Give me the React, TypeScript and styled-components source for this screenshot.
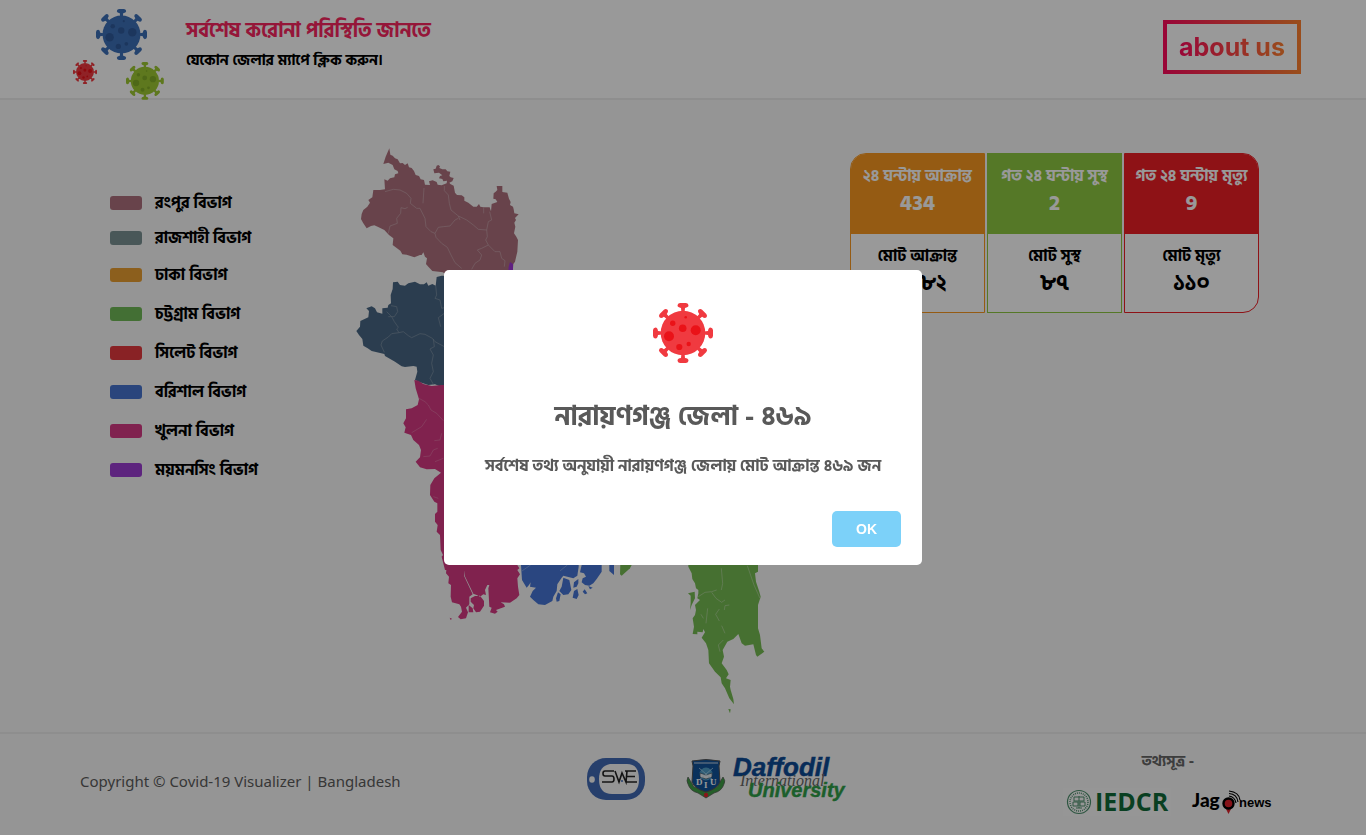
import React from "react";
import styled, { createGlobalStyle } from "styled-components";

const bangla = `"Hind Siliguri", "Noto Sans", "Noto Sans Bengali", "Open Sans", sans-serif`;

const GlobalStyle = createGlobalStyle`
  * { box-sizing: border-box; }
  body { margin: 0; background: #f8f8f8; font-family: ${bangla}; color: #000; }
  h1, h2, p, ul { margin: 0; padding: 0; }
`;

const Page = styled.div`
  min-height: 100vh;
  display: flex;
  flex-direction: column;
`;

const Header = styled.header`
  display: flex;
  justify-content: space-between;
  align-items: flex-start;
  min-height: 100px;
  padding: 0 65px 0 70px;
  background: #fff;
  border-bottom: 2px solid #ededed;
`;

const Brand = styled.div`
  display: flex;
  gap: 16px;
`;

const BrandArt = styled.svg`
  display: block;
  width: 100px;
  height: 100px;
  margin-bottom: -2px;
`;

const BrandText = styled.div`
  padding-top: 15px;
`;

const Title = styled.h1`
  font-size: 20px;
  line-height: 32px;
  font-weight: 700;
  color: #f92660;
`;

const Subtitle = styled.p`
  font-size: 15px;
  line-height: 28px;
  font-weight: 700;
`;

const AboutLink = styled.a`
  display: block;
  margin-top: 20px;
  width: 138px;
  border: 4px solid;
  border-image: linear-gradient(to right, #ff0a5c, #ff8030) 1;
  text-align: center;
  text-decoration: none;
`;

const AboutText = styled.span`
  font: 700 25px/46px Inter, "Liberation Sans", sans-serif;
  color: transparent;
  background: linear-gradient(to right, #ff0a5c, #ff8030);
  background-clip: text;
  -webkit-background-clip: text;
`;

const Main = styled.main`
  flex: 1;
  display: grid;
  grid-template-columns: 240px 420px 1fr;
  align-items: start;
  padding: 40px 0 12px 110px;
`;

const Legend = styled.ul`
  list-style: none;
  padding-top: 45px;
`;

const LegendItem = styled.li<{ $tight: boolean }>`
  display: flex;
  align-items: center;
  gap: 13px;
  height: ${(p) => (p.$tight ? 35 : 39)}px;
  font-size: 16px;
  line-height: 24px;
  font-weight: 700;
`;

const Swatch = styled.span<{ $color: string }>`
  width: 32px;
  height: 14px;
  border-radius: 3px;
  background: ${(p) => p.$color};
`;

const MapArt = styled.svg`
  display: block;
  width: 420px;
  height: 580px;
`;

const Stats = styled.div`
  display: flex;
  gap: 2px;
  padding: 13px 0 0 80px;
`;

const Card = styled.section<{ $color: string }>`
  width: 135px;
  overflow: hidden;
  text-align: center;
  font-weight: 700;
  background: #fff;
  border: 1px solid ${(p) => p.$color};
  &:first-child { border-radius: 16px 0 0 16px; }
  &:last-child { border-radius: 0 16px 16px 0; }
`;

const CardPart = styled.div<{ $fill?: string }>`
  height: ${(p) => (p.$fill ? 80 : 78)}px;
  padding-top: 9px;
  color: ${(p) => (p.$fill ? "#fff" : "#000")};
  background: ${(p) => p.$fill || "transparent"};
`;

const CardLabel = styled.p`
  font-size: 16px;
  line-height: 26px;
  white-space: nowrap;
`;

const CardValue = styled.p`
  font-size: 22px;
  line-height: 28px;
`;

const Footer = styled.footer`
  display: grid;
  grid-template-columns: 1fr 262px 1fr;
  min-height: 103px;
  border-top: 2px solid #ededed;
`;

const Copyright = styled.p`
  padding: 37px 0 0 80px;
  font: 15px/20px "Noto Sans", sans-serif;
  color: #5c5c5c;
`;

const Logos = styled.div`
  display: flex;
  align-items: center;
  align-self: start;
  gap: 41px;
  padding: 17px 0 0 35px;
`;

const Art = styled.svg`
  display: block;
  flex: none;
`;

const Sources = styled.div`
  justify-self: end;
  width: 210px;
  margin-right: 93px;
  padding-top: 16px;
`;

const SourceTitle = styled.p`
  font-size: 15px;
  line-height: 24px;
  font-weight: 700;
  color: #666;
  text-align: center;
`;

const SourceRow = styled.div`
  display: flex;
  align-items: center;
  gap: 20px;
  padding-top: 10px;
`;

const Overlay = styled.div`
  position: fixed;
  inset: 0;
  display: flex;
  align-items: center;
  justify-content: center;
  background: rgba(0, 0, 0, 0.4);
`;

const Modal = styled.div`
  width: 478px;
  padding-top: 33px;
  background: #fff;
  border-radius: 5px;
  display: flex;
  flex-direction: column;
  align-items: center;
  color: #595959;
  font-weight: 700;
`;

const ModalTitle = styled.h2`
  margin-top: 34px;
  font-size: 27px;
  line-height: 40px;
`;

const ModalText = styled.p`
  margin-top: 16px;
  font-size: 16px;
  line-height: 26px;
  font-weight: 700;
`;

const ModalFooter = styled.div`
  align-self: stretch;
  display: flex;
  justify-content: flex-end;
  padding: 32px 21px 18px;
`;

const OkButton = styled.button`
  width: 69px;
  height: 36px;
  border: 0;
  border-radius: 5px;
  background: #7cd1f9;
  color: #fff;
  font: 600 14px/20px "Liberation Sans", sans-serif;
`;

const VirusArt = ({ body, spot }: { body: string; spot: string }) => (
  <>
    <g fill={body}>
      <circle cx="30" cy="30" r="22.3" />
      {[0, 45, 90, 135, 180, 225, 270, 315].map((a) => (
        <path
          key={a}
          transform={`rotate(${a} 30 30)`}
          d="M27 0H33Q35.500 .3 35.500 2.600Q35.300 4.600 32 5L31.600 9H28.400L28 5Q24.700 4.600 24.500 2.600Q24.500 .3 27 0Z"
        />
      ))}
    </g>
    <g fill={spot}>
      <circle cx="42.700" cy="27.300" r="5" />
      <circle cx="16" cy="33.300" r="5" />
      <circle cx="29.700" cy="25.300" r="3.800" />
      <circle cx="19.700" cy="20.300" r="2.700" />
      <circle cx="26.300" cy="44" r="3.100" />
      <circle cx="35.700" cy="41" r="2.200" />
      <circle cx="32.700" cy="14.300" r="1.300" />
    </g>
  </>
);

const divisions = [
  { name: "রংপুর বিভাগ", color: "#ad717d" },
  { name: "রাজশাহী বিভাগ", color: "#7a9293" },
  { name: "ঢাকা বিভাগ", color: "#e99e31" },
  { name: "চট্টগ্রাম বিভাগ", color: "#71b957" },
  { name: "সিলেট বিভাগ", color: "#e43a3f" },
  { name: "বরিশাল বিভাগ", color: "#4774cf" },
  { name: "খুলনা বিভাগ", color: "#d63a84" },
  { name: "ময়মনসিং বিভাগ", color: "#9c3cd2" },
];

const stats = [
  { color: "#f89821", today: "২৪ ঘন্টায় আক্রান্ত", count: "434", total: "মোট আক্রান্ত", sum: "৩৩৮২" },
  { color: "#8ec841", today: "গত ২৪ ঘন্টায় সুস্থ", count: "2", total: "মোট সুস্থ", sum: "৮৭" },
  { color: "#ed1e25", today: "গত ২৪ ঘন্টায় মৃত্যু", count: "9", total: "মোট মৃত্যু", sum: "১১০" },
];

const BangladeshMap = () => (
  <MapArt viewBox="350 140 420 580" role="img" aria-label="Bangladesh">
    <g transform="translate(345 265) scale(.33333)">
      <path fill="#496784" d="M143 72L144 52 158 50 165 60 180 62 190 55 210 50 225 58 237 58 245 52 250 62 262 57 272 62 275 36 290 32 400 35V380L298 370 288 365 270 358 250 360 225 352 210 345 217 320 215 305 205 303 180 306 170 304 150 290 120 273 118 267 80 258 68 250 55 242 52 222 42 210 34 198 45 185 46 168 70 157 72 138 64 130 80 124 90 130 96 142 112 146 112 130 128 128 130 120 138 115 137 90Z" />
      <path fill="none" stroke="#8496a7" strokeWidth="2" d="M138 122L155 125 158 140 148 155 130 155M125 140L140 155 148 170 160 187 155 192 162 203 175 200 190 212 200 218 225 206 240 208 262 220 270 230 298 245M162 203L140 206 130 216 112 228 108 240 118 262M272 62L275 90 270 100 285 105 290 130 298 128M298 145L280 158 287 185M265 222L268 245 255 252 265 270 260 295 265 320 255 340 265 358" />
    </g>
    <g transform="translate(345 140) scale(.33333)">
      <path fill="#ad717d" d="M133 25L136 44 143 47 150 55 158 58 165 70 173 69 180 75 188 70 192 82 200 84 207 93 212 105 222 108 227 118 237 120 240 134 255 135 252 124 263 121 275 126 278 134 290 136 305 130 306 122 295 124 292 117 282 115 285 108 292 106 282 98 268 100 265 88 272 86 275 77 280 75 285 79 283 84 292 88 302 88 307 94 316 95 313 108 317 112 326 114 322 124 313 128 316 132 326 137 330 158 336 165 350 166 358 172 358 182 370 188 385 200 395 200 402 192 406 200 415 202 434 202 438 214 440 192 457 186 452 178 445 176 446 160 452 155 457 150 455 138 472 138 472 156 487 158 492 176 497 186 495 195 504 200 506 208 508 220 521 223 510 234 513 240 508 248 511 260 507 280 514 290 519 300 517 335 510 365 505 372 503 400H297L294 397 262 393 250 380 243 372 246 355 240 350 235 337 230 345 225 345 208 352 185 344 172 343 166 332 156 325 143 315 145 295 132 285 118 270 98 260 88 256 78 258 65 265 54 248 48 237 50 222 55 210 67 200 75 188 70 180 82 172 85 150 105 150 120 148 118 118 128 122 135 115 148 112 150 103 160 100 158 93 148 88 143 75 130 68 115 72 122 50Z" />
      <path fill="#a036d8" d="M491 380L495 366 504 372V395H490Z" />
      <path fill="none" stroke="#c9a5ad" strokeWidth="2" d="M120 155L145 148 165 150 185 160 198 175 196 190 215 205 225 205 240 235 243 260 258 275 270 280 273 292 290 310 307 322 318 345 330 368 350 385M237 144L234 190M298 138L298 152 310 165 313 190 318 210 340 228 345 240M340 235L330 240 315 258 295 260 280 262 270 280M340 228L365 240 385 255 400 268 425 270 430 245 440 240 434 215M416 203V220M425 270L427 290 422 300 430 315 410 325 397 330 410 345 405 360 390 370 380 388M430 315L450 335 465 335 470 355 480 362 478 380M188 202L180 206 168 203 167 220 155 235 157 250 135 258 130 280" />
    </g>
    <g transform="translate(395 370) scale(.33333)">
      <path fill="#d53982" d="M58 30L70 32 85 42 110 48 140 45H300V600H150L140 560 144 555 137 540 135 495 125 485 128 465 120 455 120 432 127 425 127 400 118 395 105 375 106 345 118 325 138 308 120 297 95 298 75 292 62 275 75 262 78 240 72 225 55 210 48 195 28 188 32 172 25 160 33 145 33 118 50 115 68 105 72 88 62 55Z" />
      <path fill="none" stroke="#e889b3" strokeWidth="1.500" d="M72 85L90 95 100 105 108 120 125 130 145 152M50 188L80 170 95 148M85 260L105 258 115 240 128 235M118 212L135 210 140 190M115 380L130 385M120 275L145 265" />
    </g>
    <g transform="translate(430 555) scale(.33333)">
      <path fill="#d53982" d="M35 5L45 25 50 35 48 55 57 65 55 85 63 90 62 125 66 142 88 148 93 155 96 170 84 186 92 193 108 190 114 172 108 158 118 148 118 125 128 118 102 62 108 30V0ZM108 0L104 62 130 116 140 120 150 125 160 118 168 120 165 105 172 90 180 90V0ZM122 130L135 123 150 122 162 138 162 152 150 170 138 172 130 160 132 150 122 140ZM116 150L128 160 130 172 116 172ZM181 0L178 90 175 100 178 155 185 158 180 172 195 176 203 170 198 165 225 155 222 148 212 142 240 143 260 130 268 120 264 95 262 70 270 58 262 45 268 40 262 30V0ZM59 188L66 191 62 195Z" />
      <path fill="#4675d5" d="M273 0V30L276 75 290 98 297 90 302 82 300 95 318 98 308 108 300 125 310 135 325 148 345 150 367 138 370 125 380 108 382 88 395 68 400 62 430 70 442 62 446 35V0ZM455 30L450 52 462 55 468 65 458 70 455 82 465 90 478 92 490 85 500 72 515 50V0H455ZM400 68L418 75 420 85 424 105 415 118 400 120 388 108 395 95ZM432 82L445 72 445 85 440 95 430 98ZM432 108L442 102 446 120 440 132 428 128ZM378 130L384 112 392 118 388 138 380 140ZM458 110L464 103 472 115 465 118ZM475 93L488 98 480 103ZM538 0H552V60L538 48Z" />
      <path fill="none" stroke="#92aee5" strokeWidth="2" d="M276 48L290 38 302 30M390 48L402 38 412 30" />
      <path fill="#75bb52" d="M572 0H605V30L600 40 575 62 570 58Z" />
    </g>
    <g transform="translate(670 555) scale(.33333)">
      <path fill="#75bb52" d="M55 0V35L65 55 67 72 75 85 78 100 85 105 85 115 82 130 90 135 75 150 78 165 75 180 68 190 72 215 68 237 82 238 82 230 98 232 100 222 105 232 95 248 108 265 115 285 117 325 135 350 152 367 155 385 165 400 178 430 192 448 190 432 182 405 180 395 182 375 168 370 176 358 170 345 155 325 162 305 158 285 172 260 190 252 205 237 215 265 225 272 250 268 258 300 262 305 283 290 275 280 270 240 264 220V150L272 125 268 110 258 80 255 55 264 50V0ZM54 115L74 110 75 130 65 150 60 165 62 145 62 122ZM175 462L182 463 180 475Z" />
      <path fill="none" stroke="#b5d7a2" strokeWidth="2" d="M154 40L158 85 154 105M85 125L105 112 125 110 140 105M125 112L138 130 155 142 165 135M178 150L165 152 163 165M148 162L137 178 148 198M113 160L108 205M155 212L165 235M160 255L145 270 150 290M232 32L252 90 270 130M93 178L100 190" />
    </g>
  </MapArt>
);

const SweLogo = () => (
  <Art width="58" height="42" viewBox="0 0 58 42" role="img" aria-label="SWE">
    <rect width="58" height="42" rx="19" fill="#4069b4" />
    <path d="M23 6H40Q52 6 52 21T40 36H25Q12 36 12 21 12 8 23 6Z" fill="#f8f8f8" />
    <ellipse cx="5" cy="21.500" rx="2.800" ry="3.200" fill="#f8f8f8" />
    <path d="M27 13H18Q16 13 16 15.500T18 18H25Q27 18 27 21T25 24H15M28 13L32 24 35 15 39 24 40 13M49 13H38M40 18.500H48M39 24H50" fill="none" stroke="#222" strokeWidth="1.600" />
    <circle cx="35" cy="23" r="1" fill="#4670b8" />
  </Art>
);

const DaffodilLogo = () => (
  <Art width="166" height="56" viewBox="0 0 166 56" role="img" aria-label="Daffodil International University">
    <g transform="translate(0 6)">
      <path d="M2 20Q0 24 2 27 4 34 12 36L20 41 28 36Q36 34 38 27 40 24 37 20L31 30 20 33 8 30Z" fill="#3f9d45" stroke="#555" strokeWidth=".7" />
      <path d="M6 4Q20 1 34 4L33 9 34 25Q31 32 20 35 9 32 6 25L7 9Z" fill="#12529a" stroke="#555" strokeWidth="1" />
      <path d="M8 6H32" stroke="#c8d4e4" strokeWidth="1" />
      <circle cx="20" cy="17" r="6.500" fill="#4f9dc8" />
      <path d="M14 16L20 18 26 16V20L20 22 14 20Z" fill="#e7edf2" stroke="#345" strokeWidth=".6" />
      <path d="M13 11L27 23M27 11L13 23" stroke="#b9dcee" strokeWidth=".7" />
      <g fill="#fff" fontFamily="Liberation Serif, serif" fontWeight="700" fontSize="9">
        <text x="10" y="28">D</text>
        <text x="18" y="31">I</text>
        <text x="24" y="28">U</text>
      </g>
      <circle cx="20" cy="38" r="2.200" fill="#e3262d" />
    </g>
    <g fontFamily="Liberation Sans, sans-serif" fontStyle="italic" fontWeight="700">
      <text x="47" y="25" fill="#0c4a94" stroke="#0c4a94" strokeWidth=".5" fontSize="26">Daffodil</text>
      <text x="54" y="35" fill="#666" fontFamily="Liberation Serif, serif" fontWeight="400" fontSize="16">International</text>
      <text x="62" y="46" fill="#2f9e48" stroke="#2f9e48" strokeWidth=".4" fontSize="20">University</text>
    </g>
  </Art>
);

const IedcrLogo = () => (
  <Art width="108" height="36" viewBox="0 0 108 36" role="img" aria-label="IEDCR">
    <rect y="4" width="108" height="28" fill="#fbfbfb" />
    <g fill="none" stroke="#4c8f6c" transform="translate(0 4)">
      <circle cx="16" cy="14" r="11.500" strokeWidth="1.200" />
      <circle cx="16" cy="14" r="9" strokeWidth="1.500" strokeDasharray="1 1" />
      <path d="M11 9H21V13H11ZM10 14H15V18H10ZM17 14H22V18H17ZM13 20H19M16 8V20" strokeWidth="1" />
    </g>
    <text x="32" y="27" fill="#0f6a37" fontFamily="Open Sans, sans-serif" fontWeight="700" fontSize="25">IEDCR</text>
  </Art>
);

const JagoLogo = () => (
  <Art width="82" height="36" viewBox="0 0 82 36" role="img" aria-label="Jago news">
    <text x="1" y="23" fontFamily="Lato, sans-serif" fontWeight="900" fontSize="19">Jag</text>
    <path d="M34 23H41L37.500 30Z" fill="#e0202a" />
    <circle cx="37.500" cy="19.500" r="5" fill="#e0202a" stroke="#000" strokeWidth="2.400" />
    <path d="M38 12Q44 13 45 19M38 9.500Q46 10 47 18M38 7Q48 8 49 16" fill="none" stroke="#000" strokeWidth="1.200" />
    <text x="48" y="23" fontFamily="Liberation Sans, sans-serif" fontWeight="700" fontSize="13">news</text>
  </Art>
);

export default function App() {
  return (
    <Page>
      <GlobalStyle />
      <Header>
        <Brand>
          <BrandArt viewBox="0 0 100 100" aria-hidden="true">
            <g transform="translate(26 9) scale(.85)"><VirusArt body="#3d70b8" spot="#305b9c" /></g>
            <g transform="translate(3 60) scale(.4)"><VirusArt body="#f03a40" spot="#ea1218" /></g>
            <g transform="translate(56 62) scale(.63)"><VirusArt body="#9dc832" spot="#82ad28" /></g>
          </BrandArt>
          <BrandText>
            <Title>সর্বশেষ করোনা পরিস্থিতি জানতে</Title>
            <Subtitle>যেকোন জেলার ম্যাপে ক্লিক করুন।</Subtitle>
          </BrandText>
        </Brand>
        <AboutLink href="#about"><AboutText>about us</AboutText></AboutLink>
      </Header>

      <Main>
        <Legend>
          {divisions.map((d, i) => (
            <LegendItem key={d.name} $tight={i < 2}>
              <Swatch $color={d.color} />
              {d.name}
            </LegendItem>
          ))}
        </Legend>
        <BangladeshMap />
        <Stats>
          {stats.map((s) => (
            <Card key={s.color} $color={s.color}>
              <CardPart $fill={s.color}>
                <CardLabel>{s.today}</CardLabel>
                <CardValue>{s.count}</CardValue>
              </CardPart>
              <CardPart>
                <CardLabel>{s.total}</CardLabel>
                <CardValue>{s.sum}</CardValue>
              </CardPart>
            </Card>
          ))}
        </Stats>
      </Main>

      <Footer>
        <Copyright>Copyright © Covid-19 Visualizer | Bangladesh</Copyright>
        <Logos>
          <SweLogo />
          <DaffodilLogo />
        </Logos>
        <Sources>
          <SourceTitle>তথ্যসূত্র -</SourceTitle>
          <SourceRow>
            <IedcrLogo />
            <JagoLogo />
          </SourceRow>
        </Sources>
      </Footer>

      <Overlay>
        <Modal role="dialog" aria-modal="true" aria-labelledby="case-title">
          <Art width="60" height="60" viewBox="0 0 60 60" aria-hidden="true">
            <VirusArt body="#f03a40" spot="#ea1218" />
          </Art>
          <ModalTitle id="case-title">নারায়ণগঞ্জ জেলা - ৪৬৯</ModalTitle>
          <ModalText>সর্বশেষ তথ্য অনুযায়ী নারায়ণগঞ্জ জেলায় মোট আক্রান্ত ৪৬৯ জন</ModalText>
          <ModalFooter>
            <OkButton type="button">OK</OkButton>
          </ModalFooter>
        </Modal>
      </Overlay>
    </Page>
  );
}
